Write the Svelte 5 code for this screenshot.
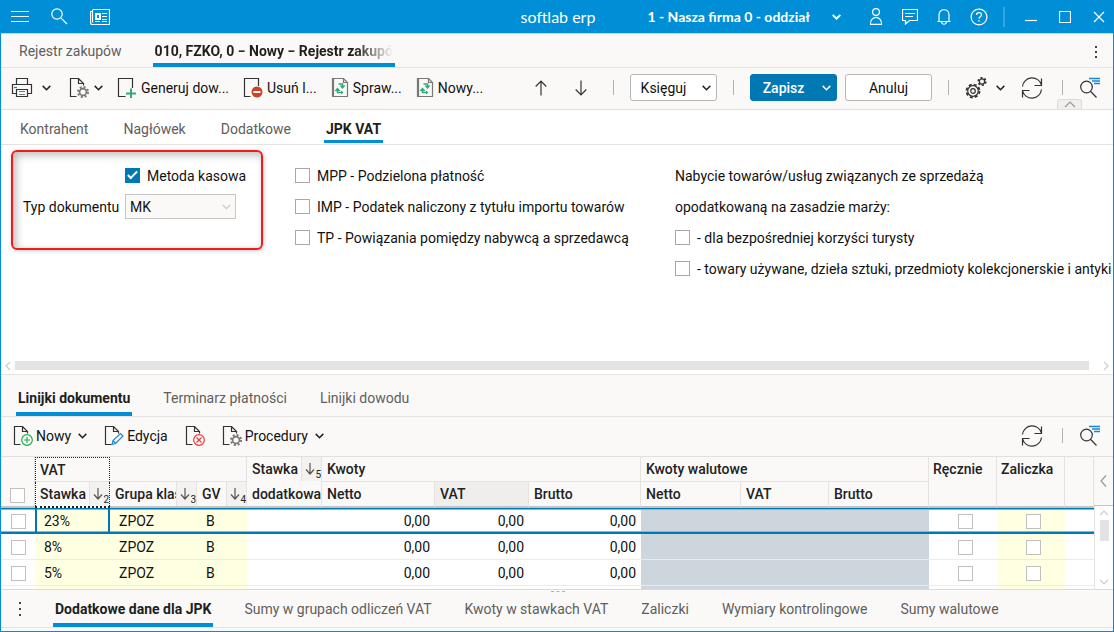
<script>
	let cashMethod = $state(true);
	let docType = $state('MK');
	let activeRow = $state(0);

	const docTabs = ['Rejestr zakupów', '010, FZKO, 0 − Nowy − Rejestr zakupów'];
	const formTabs = ['Kontrahent', 'Nagłówek', 'Dodatkowe', 'JPK VAT'];
	const lineTabs = ['Linijki dokumentu', 'Terminarz płatności', 'Linijki dowodu'];
	const footerTabs = [
		'Dodatkowe dane dla JPK',
		'Sumy w grupach odliczeń VAT',
		'Kwoty w stawkach VAT',
		'Zaliczki',
		'Wymiary kontrolingowe',
		'Sumy walutowe'
	];

	const jpkFlags = [
		'MPP - Podzielona płatność',
		'IMP - Podatek naliczony z tytułu importu towarów',
		'TP - Powiązania pomiędzy nabywcą a sprzedawcą'
	];
	const marginFlags = [
		'- dla bezpośredniej korzyści turysty',
		'- towary używane, dzieła sztuki, przedmioty kolekcjonerskie i antyki'
	];

	const rows = [
		{ rate: '23%', group: 'ZPOZ', gv: 'B', net: '0,00', vat: '0,00', gross: '0,00' },
		{ rate: '8%', group: 'ZPOZ', gv: 'B', net: '0,00', vat: '0,00', gross: '0,00' },
		{ rate: '5%', group: 'ZPOZ', gv: 'B', net: '0,00', vat: '0,00', gross: '0,00' }
	];
</script>

{#snippet chevron()}
	<svg class="chevron" width="9" height="6" viewBox="0 0 9 6"><path d="M.7.9 4.5 4.7 8.3.9" /></svg>
{/snippet}

{#snippet page()}
	<path d="M7.500 18.500H1.500V.5H9.500L14.500 5.500V7.500M9.500.5V5.500H14.500" />
{/snippet}

{#snippet docGear()}
	<svg width="20" height="20" viewBox="0 0 20 20">
		{@render page()}
		<g class="gray">
			<circle class="ring" cx="14" cy="14" r="3.400" />
			<circle class="teeth" cx="14" cy="14" r="5" />
		</g>
	</svg>
{/snippet}

{#snippet docSwap()}
	<svg width="18" height="20" viewBox="0 0 18 20">
		<path class="gray" d="M1.500.500H12.500L16.500 4.500V18.500H1.500ZM12.500.500V4.500H16.500M2.500 1V18" />
		<path class="swap-line" d="M7.500 6H11.500V8M10.500 14.500H6.500V12.500" />
		<path class="swap-head" d="M8.500 7.500H14.500L11.500 11ZM3.500 13H9.500L6.500 9.500ZM10 12.500V16.500L12.500 14.500Z" />
	</svg>
{/snippet}

{#snippet refresh()}
	<svg width="22" height="22" viewBox="0 0 22 22">
		<path d="M1.500 9.500A9.700 9.700 0 0 1 20.500 8M20.500 1.500V8.500H13.500M20.500 12.500A9.700 9.700 0 0 1 1.500 14M1.500 20.500V13.500H8.500" />
	</svg>
{/snippet}

{#snippet filterSearch()}
	<svg width="22" height="22" viewBox="0 0 22 22">
		<circle cx="7.500" cy="10" r="5.800" /><path d="M11.700 14.500 17.500 20.500" />
		<path class="blue" d="M10 1.500H21M13 4H21M15 6.500H21" />
	</svg>
{/snippet}

{#snippet tabs(items, active)}
	{#each items as item, i}
		<button class="tab" class:active={i === active} role="tab" aria-selected={i === active}>
			<span>{item}</span>
		</button>
	{/each}
{/snippet}

{#snippet sort(order)}
	<button class="sort" aria-label="Sortowanie">
		<svg width="10" height="12" viewBox="0 0 10 12"><path d="M5 0V11M1 6.500 5 11 9 6.500" /></svg>
		<sub>{order}</sub>
	</button>
{/snippet}

<div class="window">
	<header class="titlebar">
		<div class="title-left">
			<button aria-label="Menu">
				<svg width="18" height="12" viewBox="0 0 18 12"><path d="M0 .5H18M0 5.500H18M0 10.500H18" /></svg>
			</button>
			<button aria-label="Szukaj">
				<svg width="17" height="17" viewBox="0 0 17 17"><circle cx="6" cy="6" r="5.200" /><path d="M9.800 9.800 16 16" /></svg>
			</button>
			<button aria-label="Aktualności">
				<svg width="20" height="16" viewBox="0 0 20 16">
					<path d="M2.500.500H19.500V15.500H2Q.500 15.500.500 13V2.500H2.500M2.500 1V13.500" />
					<path class="bold" d="M6 5H10V10H6Z" />
					<path d="M12 4.500H17M12 7.500H17M12 10.500H17M5 12.500H10M12 12.500H17" />
				</svg>
			</button>
		</div>
		<div class="brand">softlab erp</div>
		<div class="title-right">
			<button class="company">1 - Nasza firma 0 - oddział {@render chevron()}</button>
			<div class="account">
				<button aria-label="Użytkownik">
					<svg width="14" height="17" viewBox="0 0 14 17"><circle cx="7" cy="4" r="3.400" /><path d="M1.500 16.400C1 7 13 7 12.500 16.400Z" /></svg>
				</button>
				<button aria-label="Wiadomości">
					<svg width="16" height="16" viewBox="0 0 16 16"><path d="M.5.5H15.500V11.500H7.500L3.500 15V11.500H.5ZM3 4.500H13M3 7.500H11" /></svg>
				</button>
				<button aria-label="Powiadomienia">
					<svg width="14" height="17" viewBox="0 0 14 17"><path d="M.5 13.500H13.500M2 13.500V7C2 0 12 0 12 7V13.500M4.500 14C5 17 9 17 9.500 14" /></svg>
				</button>
				<button aria-label="Pomoc">
					<svg width="18" height="18" viewBox="0 0 18 18"><circle cx="9" cy="9" r="7.900" /><path d="M6.500 7C6.500 3.800 11.500 3.800 11.500 6.700 11.500 8.700 9 8.700 9 10.800M9 12V13.500" /></svg>
				</button>
			</div>
			<span class="title-sep"></span>
			<div class="win-buttons">
				<button aria-label="Minimalizuj"><svg width="12" height="12" viewBox="0 0 12 12"><path d="M0 9.500H12" /></svg></button>
				<button aria-label="Maksymalizuj"><svg width="12" height="12" viewBox="0 0 12 12"><path d="M.5.5H11.500V11.500H.5Z" /></svg></button>
				<button aria-label="Zamknij"><svg width="12" height="12" viewBox="0 0 12 12"><path d="M1 1 11 11M11 1 1 11" /></svg></button>
			</div>
		</div>
	</header>

	<nav class="tabs doc-tabs" role="tablist">
		{@render tabs(docTabs, 1)}
		<button class="kebab" aria-label="Więcej"><i></i><i></i><i></i></button>
	</nav>

	<div class="toolbar main-tools">
		<div class="tools">
			<button class="tool" aria-label="Drukuj">
				<svg width="22" height="20" viewBox="0 0 22 20">
					<path d="M5.500 6.500V.5H16.500V6.500M5.500 15.500H1.500V6.500H20.500V15.500H16.500M5.500 11.500H16.500V18.500H5.500Z" />
					<path class="gray" d="M8 13.500H14M8 16.500H14" /><path class="blue" d="M3 9.500H6" />
				</svg>
				{@render chevron()}
			</button>
			<button class="tool tight" aria-label="Opcje dokumentu">{@render docGear()}{@render chevron()}</button>
			<button class="tool text">
				<svg width="20" height="20" viewBox="0 0 20 20">
					<path d="M8.500 18.500H1.500V.5H15.500V10" /><path class="green" d="M9 15.500H19M14 10.500V20" />
				</svg>
				Generuj dow...
			</button>
			<button class="tool text">
				<svg width="20" height="20" viewBox="0 0 20 20">
					<path d="M7.500 18.500H1.500V.5H15.500V8" /><circle class="stop" cx="14" cy="14" r="5.500" /><path class="light" d="M10.500 14H17.500" />
				</svg>
				Usuń l...
			</button>
			<button class="tool text">{@render docSwap()}Spraw...</button>
			<button class="tool text">{@render docSwap()}Nowy...</button>
		</div>
		<div class="actions">
			<button class="arrow" aria-label="Poprzedni"><svg width="12" height="16" viewBox="0 0 12 16"><path d="M6 15.500V1M.7 6.500 6 1 11.300 6.500" /></svg></button>
			<button class="arrow" aria-label="Następny"><svg width="12" height="16" viewBox="0 0 12 16"><path d="M6 .5V15M.7 9.500 6 15 11.300 9.500" /></svg></button>
			<span class="sep"></span>
			<div class="split"><button>Księguj</button><button aria-label="Rozwiń: Księguj">{@render chevron()}</button></div>
			<span class="sep"></span>
			<div class="pair">
				<div class="split primary"><button>Zapisz</button><button aria-label="Rozwiń: Zapisz">{@render chevron()}</button></div>
				<div class="split"><button>Anuluj</button></div>
			</div>
			<span class="sep"></span>
			<button class="tool" aria-label="Ustawienia">
				<svg width="22" height="22" viewBox="0 0 22 22">
					<circle cx="8" cy="14" r="2.300" /><circle cx="8" cy="14" r="5.300" /><circle class="cogs" cx="8" cy="14" r="6.500" />
					<circle cx="17" cy="4.500" r="2.600" /><circle class="cogs small" cx="17" cy="4.500" r="3.700" />
				</svg>
				{@render chevron()}
			</button>
			<button class="tool refresh" aria-label="Odśwież">{@render refresh()}</button>
			<span class="sep"></span>
			<button class="tool" aria-label="Filtruj">{@render filterSearch()}</button>
		</div>
		<button class="collapse" aria-label="Zwiń">
			<svg width="12" height="7" viewBox="0 0 12 7"><path d="M1 6 6 1 11 6" /></svg>
		</button>
	</div>

	<nav class="tabs form-tabs" role="tablist">{@render tabs(formTabs, 3)}</nav>

	<main class="form">
		<section class="marked">
			<label class="check"><input type="checkbox" bind:checked={cashMethod} />Metoda kasowa</label>
			<label class="field" for="doc-type">Typ dokumentu</label>
			<div class="select">
				<select id="doc-type" bind:value={docType} disabled>
					<option>MK</option>
				</select>
				{@render chevron()}
			</div>
		</section>
		<section class="flags">
			{#each jpkFlags as flag}
				<label class="check"><input type="checkbox" />{flag}</label>
			{/each}
		</section>
		<section class="flags margin">
			<p>Nabycie towarów/usług związanych ze sprzedażą</p>
			<p>opodatkowaną na zasadzie marży:</p>
			{#each marginFlags as flag}
				<label class="check"><input type="checkbox" />{flag}</label>
			{/each}
		</section>
	</main>
	<div class="hscroll">
		<svg width="6" height="10" viewBox="0 0 6 10"><path d="M5 1 1 5 5 9" /></svg>
		<span class="thumb"></span>
		<svg width="6" height="10" viewBox="0 0 6 10"><path d="M1 1 5 5 1 9" /></svg>
	</div>

	<nav class="tabs line-tabs" role="tablist">{@render tabs(lineTabs, 0)}</nav>

	<div class="toolbar line-tools">
		<div class="tools">
			<button class="tool text">
				<svg width="20" height="20" viewBox="0 0 20 20">
					{@render page()}<circle class="add" cx="14" cy="14" r="5.300" /><path class="add" d="M11 14H17M14 11V17" />
				</svg>
				Nowy {@render chevron()}
			</button>
			<button class="tool text">
				<svg width="20" height="20" viewBox="0 0 20 20">
					{@render page()}<path class="pencil" d="M8 18.500 9 14.500 16.500 7.500 19 10 11.500 17.500ZM9 14.500 11.500 17.500" />
				</svg>
				Edycja
			</button>
			<button class="tool" aria-label="Usuń">
				<svg width="20" height="20" viewBox="0 0 20 20">
					{@render page()}<circle class="remove" cx="14" cy="14" r="5.300" /><path class="remove" d="M11.500 11.500 16.500 16.500M16.500 11.500 11.500 16.500" />
				</svg>
			</button>
			<button class="tool text">{@render docGear()}Procedury {@render chevron()}</button>
		</div>
		<div class="actions">
			<button class="tool refresh" aria-label="Odśwież">{@render refresh()}</button>
			<span class="sep"></span>
			<button class="tool" aria-label="Filtruj">{@render filterSearch()}</button>
		</div>
	</div>

	<div class="grid">
		<table>
			<colgroup>
				<col class="c-check" /><col class="c-rate" /><col class="c-group" /><col class="c-gv" /><col class="c-extra" />
				<col class="c-net" /><col class="c-vat" /><col class="c-gross" />
				<col class="c-fnet" /><col class="c-fvat" /><col class="c-fgross" />
				<col class="c-flag" /><col class="c-flag" /><col />
			</colgroup>
			<thead>
				<tr>
					<th rowspan="2" class="pick"><input type="checkbox" aria-label="Zaznacz wszystkie" /></th>
					<th class="focus-top">VAT</th>
					<th colspan="2"></th>
					<th class="free"><div class="head">Stawka{@render sort(5)}</div></th>
					<th colspan="3">Kwoty</th>
					<th colspan="3">Kwoty walutowe</th>
					<th rowspan="2" class="tall">Ręcznie</th>
					<th rowspan="2" class="tall">Zaliczka</th>
					<th rowspan="2"></th>
				</tr>
				<tr>
					<th class="focus-bottom"><div class="head">Stawka{@render sort(2)}</div></th>
					<th><div class="head"><span>Grupa klas</span>{@render sort(3)}</div></th>
					<th><div class="head">GV{@render sort(4)}</div></th>
					<th>dodatkowa</th>
					<th>Netto</th>
					<th class="shaded">VAT</th>
					<th>Brutto</th>
					<th>Netto</th>
					<th>VAT</th>
					<th>Brutto</th>
				</tr>
			</thead>
			<tbody>
				{#each rows as row, i}
					<tr class:selected={i === activeRow} onclick={() => (activeRow = i)}>
						<td class="pick"><input type="checkbox" aria-label="Zaznacz {row.rate}" /></td>
						<td class="yellow rate">{row.rate}</td>
						<td class="yellow">{row.group}</td>
						<td class="yellow">{row.gv}</td>
						<td></td>
						<td class="num">{row.net}</td>
						<td class="num">{row.vat}</td>
						<td class="num">{row.gross}</td>
						<td class="locked"></td>
						<td class="locked"></td>
						<td class="locked"></td>
						<td class="center"><input type="checkbox" aria-label="Ręcznie {row.rate}" /></td>
						<td class="center yellow"><input type="checkbox" aria-label="Zaliczka {row.rate}" /></td>
						<td></td>
					</tr>
				{/each}
				<tr class="rest">
					<td></td><td colspan="3" class="yellow"></td><td colspan="4"></td>
					<td colspan="3" class="locked"></td><td></td><td class="yellow"></td><td></td>
				</tr>
			</tbody>
		</table>
		<aside class="rail">
			<button aria-label="Rozwiń panel"><svg width="7" height="12" viewBox="0 0 7 12"><path d="M6 .5 1 6 6 11.500" /></svg></button>
			<div class="vscroll">
				<svg width="10" height="6" viewBox="0 0 10 6"><path d="M1 5 5 1 9 5" /></svg>
				<span class="thumb"></span>
				<svg width="10" height="6" viewBox="0 0 10 6"><path d="M1 1 5 5 9 1" /></svg>
			</div>
		</aside>
	</div>

	<nav class="tabs footer-tabs" role="tablist">
		<span class="grip"></span>
		<button class="kebab" aria-label="Więcej"><i></i><i></i><i></i></button>
		{@render tabs(footerTabs, 0)}
	</nav>
</div>

<style>
	:global(body) {
		margin: 0;
	}

	.window {
		display: flex;
		flex-direction: column;
		box-sizing: border-box;
		min-height: 100vh;
		padding-bottom: 3px;
		border: 1px solid #008fd6;
		border-top: 0;
		background: #faf9f8;
		color: #111;
		font-family: Roboto, 'Liberation Sans', sans-serif;
		font-size: 14px;
		line-height: 20px;
		white-space: nowrap;
		overflow: hidden;
	}

	button {
		display: inline-flex;
		align-items: center;
		padding: 0;
		border: 0;
		background: none;
		color: inherit;
		font: inherit;
		white-space: nowrap;
		cursor: pointer;
	}

	svg {
		flex: none;
		fill: none;
		stroke: #333;
		stroke-width: 1.2;
	}

	.chevron {
		stroke: #222;
		stroke-width: 1.5;
	}

	/* Title bar */
	.titlebar {
		display: grid;
		grid-template-columns: 1fr auto 1fr;
		align-items: center;
		height: 33px;
		padding: 0 8px 0 10px;
		border-bottom: 1px solid #b9dcee;
		background: #008fd6;
		color: #fff;
	}

	.titlebar svg {
		stroke: #fff;
		stroke-width: 1.2;
	}

	.titlebar svg .bold {
		stroke-width: 2;
	}

	.title-left {
		display: flex;
		align-items: center;
		gap: 22px;
	}

	.brand {
		font-family: Lato, sans-serif;
		font-size: 16px;
	}

	.title-right {
		display: flex;
		align-items: center;
		justify-content: flex-end;
	}

	.company {
		gap: 22px;
		margin-right: 28px;
		font-family: Lato, sans-serif;
		font-size: 14px;
		font-weight: 700;
	}

	.titlebar .chevron {
		stroke-width: 2;
	}

	.account {
		display: flex;
		align-items: center;
		gap: 19px;
	}

	.title-sep {
		width: 2px;
		height: 20px;
		margin: 0 20px 0 15px;
		background: #33a5de;
	}

	.win-buttons {
		display: flex;
		gap: 22px;
	}

	/* Tabs */
	.tabs {
		display: flex;
		position: relative;
		gap: 29px;
		border-bottom: 1px solid #e4e3e2;
	}

	.tab {
		align-items: center;
		padding: 0 2px;
		border-bottom: 4px solid transparent;
		color: #605e5c;
	}

	.tab.active {
		border-color: #008fd6;
		color: #201f1e;
		font-weight: 700;
	}

	.kebab {
		flex-direction: column;
		gap: 3px;
	}

	.kebab i {
		width: 2px;
		height: 2px;
		background: #444;
	}

	.doc-tabs {
		height: 33px;
		padding: 0 16px;
	}

	.doc-tabs .tab {
		padding-top: 4px;
	}

	.doc-tabs .active span {
		width: 238px;
		overflow: hidden;
		text-align: left;
		mask-image: linear-gradient(90deg, #000 200px, transparent);
	}

	.doc-tabs .kebab {
		margin: 12px 0 0 auto;
		align-self: flex-start;
	}

	.form-tabs {
		gap: 31px;
		height: 34px;
		padding: 0 17px;
		background: #fff;
	}

	.form-tabs .tab {
		margin-bottom: 1px;
		padding-top: 8px;
		border-bottom-width: 3px;
	}

	.line-tabs {
		height: 41px;
		padding: 0 15px;
	}

	.line-tabs .tab {
		padding-top: 8px;
	}

	/* Toolbars */
	.toolbar {
		display: flex;
		position: relative;
		align-items: center;
		justify-content: space-between;
		border-bottom: 1px solid #e1e0df;
	}

	.main-tools {
		height: 39px;
		padding: 0 12px 2px 10px;
	}

	.line-tools {
		height: 37px;
		padding: 0 12px 2px;
	}

	.tools,
	.actions,
	.pair {
		display: flex;
		align-items: center;
	}

	.tools {
		gap: 14px;
	}

	.line-tools .tools {
		gap: 17px;
	}

	.main-tools .tool {
		gap: 9px;
	}

	.main-tools .tool.tight {
		gap: 5px;
		margin-left: 4px;
	}

	.main-tools .tools .text {
		gap: 4px;
	}

	.line-tools .text {
		gap: 3px;
	}

	.tool .gray {
		stroke: #777;
	}

	.gray .ring {
		stroke-width: 1.6;
	}

	.gray .teeth {
		stroke-width: 2;
		stroke-dasharray: 2 1.927;
	}

	.cogs {
		stroke-width: 1.8;
		stroke-dasharray: 3 2.105;
	}

	.cogs.small {
		stroke-dasharray: 2 1.874;
	}

	.tool .green {
		stroke: #34a879;
		stroke-width: 2;
	}

	.tool .swap-line {
		stroke: #34a879;
		stroke-width: 1.6;
	}

	.tool .swap-head {
		fill: #34a879;
		stroke: none;
	}

	.tool .blue {
		stroke: #1b87cc;
		stroke-width: 1.3;
	}

	.tool .stop {
		fill: #d0402b;
		stroke: none;
	}

	.tool .light {
		stroke: #fff;
		stroke-width: 2;
	}

	.tool .add {
		fill: #faf9f8;
		stroke: #1faf4e;
	}

	.tool .remove {
		fill: #faf9f8;
		stroke: #ef3b3b;
	}

	.tool .pencil {
		fill: #faf9f8;
		stroke: #1b87cc;
	}

	.line-tools .text .chevron {
		margin-left: 4px;
	}

	.actions {
		gap: 16px;
	}

	.arrow + .arrow {
		margin: 0 10px 0 12px;
	}

	.refresh {
		margin-right: 3px;
	}

	.sep {
		width: 1px;
		height: 15px;
		background: #b5b3b1;
	}

	.split {
		display: flex;
		box-sizing: border-box;
		width: 87px;
		height: 27px;
		border: 1px solid #b8b6b4;
		border-radius: 3px;
		background: #fff;
	}

	.split button {
		flex: 1;
		justify-content: center;
		padding: 0 4px;
	}

	.split button + button {
		flex: none;
		width: 20px;
		padding: 0;
	}

	.split.primary {
		border-color: #0078b4;
		background: #0078b4;
		color: #fff;
		font-weight: 500;
	}

	.primary .chevron {
		stroke: #fff;
	}

	.pair {
		gap: 8px;
	}

	.collapse {
		position: absolute;
		right: 31px;
		bottom: 0;
		justify-content: center;
		width: 25px;
		height: 10px;
		border: 1px solid #dddbda;
		border-bottom: 0;
		border-radius: 3px 3px 0 0;
		background: #f0efee;
	}

	.collapse svg {
		stroke: #999;
	}

	/* Form */
	.form {
		display: flex;
		flex: 1;
		align-items: flex-start;
		padding: 5px 0 0 10px;
		background: #fff;
	}

	.marked {
		display: grid;
		flex: none;
		grid-template-columns: 95px 111px;
		grid-auto-rows: 31px;
		column-gap: 7px;
		align-items: center;
		box-sizing: border-box;
		width: 252px;
		height: 100px;
		margin-right: 32px;
		padding: 8px 10px;
		border: 2px solid #f3191c;
		border-radius: 6px;
		box-shadow: inset 3px 3px 8px #0004, 1px 1px 4px #0003;
	}

	.marked .check {
		grid-column: 2;
	}

	.field {
		text-align: right;
	}

	.check {
		display: flex;
		align-items: center;
		gap: 7px;
	}

	input[type='checkbox'] {
		flex: none;
		appearance: none;
		box-sizing: border-box;
		width: 15px;
		height: 15px;
		margin: 0;
		border: 1px solid #aaa8a6;
		background: #fff;
	}

	input[type='checkbox']:checked {
		border-color: #0078b4;
		background: #0078b4;
	}

	input[type='checkbox']:checked::after {
		content: '';
		display: block;
		box-sizing: border-box;
		width: 5px;
		height: 10px;
		margin: 0 auto;
		border: solid #fff;
		border-width: 0 2px 2px 0;
		transform: rotate(45deg);
	}

	.select {
		display: grid;
		align-items: center;
	}

	.select select {
		grid-area: 1 / 1;
		appearance: none;
		height: 25px;
		padding: 0 4px;
		border: 1px solid #c8c6c4;
		border-radius: 0;
		background: #faf9f8;
		color: #111;
		font: inherit;
		opacity: 1;
	}

	.select .chevron {
		grid-area: 1 / 1;
		justify-self: end;
		margin-right: 5px;
		stroke: #c8c6c4;
		stroke-width: 1.2;
		pointer-events: none;
	}

	.flags {
		display: grid;
		flex: none;
		grid-auto-rows: 31px;
		align-items: center;
		width: 380px;
		padding-top: 10px;
	}

	.flags.margin {
		width: auto;
	}

	.flags p {
		margin: 0;
	}

	.hscroll {
		display: flex;
		align-items: center;
		gap: 4px;
		height: 9px;
		padding: 4px;
		border-bottom: 1px solid #e4e3e2;
		background: #fff;
	}

	.hscroll svg,
	.vscroll svg {
		stroke: #cfcdcb;
	}

	.hscroll .thumb {
		flex: 1;
		height: 9px;
		margin-right: 10px;
		background: #e3e3e3;
	}

	/* Grid */
	.grid {
		display: flex;
	}

	table {
		flex: 1;
		width: 100%;
		table-layout: fixed;
		border-spacing: 0;
	}

	.c-check {
		width: 34px;
	}

	.c-rate,
	.c-extra {
		width: 75px;
	}

	.c-group {
		width: 87px;
	}

	.c-gv {
		width: 50px;
	}

	.c-net {
		width: 113px;
	}

	.c-vat {
		width: 94px;
	}

	.c-gross {
		width: 112px;
	}

	.c-fnet {
		width: 100px;
	}

	.c-fvat {
		width: 88px;
	}

	.c-fgross {
		width: 100px;
	}

	.c-flag {
		width: 68px;
	}

	th {
		box-sizing: border-box;
		height: 25px;
		padding: 0 0 0 5px;
		border-right: 1px solid #e4e3e2;
		border-bottom: 1px solid #e4e3e2;
		font-weight: 500;
		color: #222;
		text-align: left;
		overflow: hidden;
	}

	thead tr + tr th,
	th[rowspan] {
		height: 26px;
		border-bottom: 2px solid #c4c3c2;
	}

	th.free {
		border-bottom-color: transparent;
	}

	th.shaded {
		background: #efeeed;
	}

	th.tall {
		padding-top: 2px;
		padding-left: 4px;
		vertical-align: top;
	}

	.focus-top,
	.focus-bottom {
		border: 1px dotted #222;
	}

	th.focus-top {
		padding-left: 4px;
		border-bottom: 1px solid #e4e3e2;
	}

	thead tr + tr th.focus-bottom {
		padding-left: 4px;
		border-top: 0;
		border-bottom: 2px dotted #222;
	}

	.pick {
		text-align: center;
	}

	th.pick {
		padding: 0 0 2px;
		vertical-align: bottom;
	}

	.pick input,
	.center input {
		vertical-align: middle;
		border-color: #c2c0be;
	}

	.head {
		display: flex;
		justify-content: space-between;
		height: 24px;
		align-items: center;
		overflow: hidden;
	}

	.head span {
		overflow: hidden;
	}

	.sort {
		flex: none;
		box-sizing: border-box;
		justify-content: flex-end;
		width: 20px;
		height: 24px;
		border-left: 1px solid #e4e3e2;
		background: #f3f2f1;
	}

	.sort svg {
		stroke: #555;
	}

	.sort sub {
		align-self: flex-end;
		font-size: 10px;
		line-height: 12px;
		font-weight: 400;
		vertical-align: baseline;
	}

	td {
		box-sizing: border-box;
		height: 26px;
		padding: 0 9px;
		border-bottom: 1px solid #ecebea;
		background: #fff;
	}

	td.pick,
	td.center {
		padding: 0;
		text-align: center;
	}

	td.center {
		padding-left: 4px;
	}

	td.num {
		padding-right: 5px;
		text-align: right;
	}

	td.yellow {
		background: #ffffe1;
	}

	td.locked {
		background: #ced6dd;
	}

	.selected td {
		border-top: 1px solid #0078b4;
		border-bottom: 2px solid #0078b4;
		box-shadow: inset 0 1px #7fbbd9, inset 0 -1px #7fbbd9;
	}

	.selected td.rate {
		padding: 0 7px;
		border-right: 2px solid #0078b4;
		border-left: 2px solid #0078b4;
	}

	.rest td {
		height: 3px;
		padding: 0;
		border: 0;
	}

	.rail {
		display: flex;
		flex: none;
		flex-direction: column;
		width: 19px;
	}

	.rail button {
		justify-content: center;
		height: 49px;
		border-bottom: 1px solid #c4c3c2;
	}

	.rail button svg {
		stroke: #999;
	}

	.vscroll {
		display: flex;
		flex: 1;
		flex-direction: column;
		align-items: center;
		padding: 4px 0;
		border-left: 1px solid #e4e3e2;
		background: #fff;
	}

	.vscroll .thumb {
		width: 9px;
		height: 21px;
		margin: 4px 0 auto;
		background: #e3e3e3;
	}

	.footer-tabs {
		height: 37px;
		padding: 0 18px;
		border-top: 1px solid #dddbda;
	}

	.footer-tabs .tab {
		padding-top: 4px;
	}

	.footer-tabs .kebab {
		justify-content: center;
		gap: 4px;
		margin-right: 3px;
	}

	.grip {
		position: absolute;
		top: 1px;
		left: 50%;
		width: 14px;
		margin-left: -6px;
		border-top: 1px dashed #b5b3b1;
	}
</style>
